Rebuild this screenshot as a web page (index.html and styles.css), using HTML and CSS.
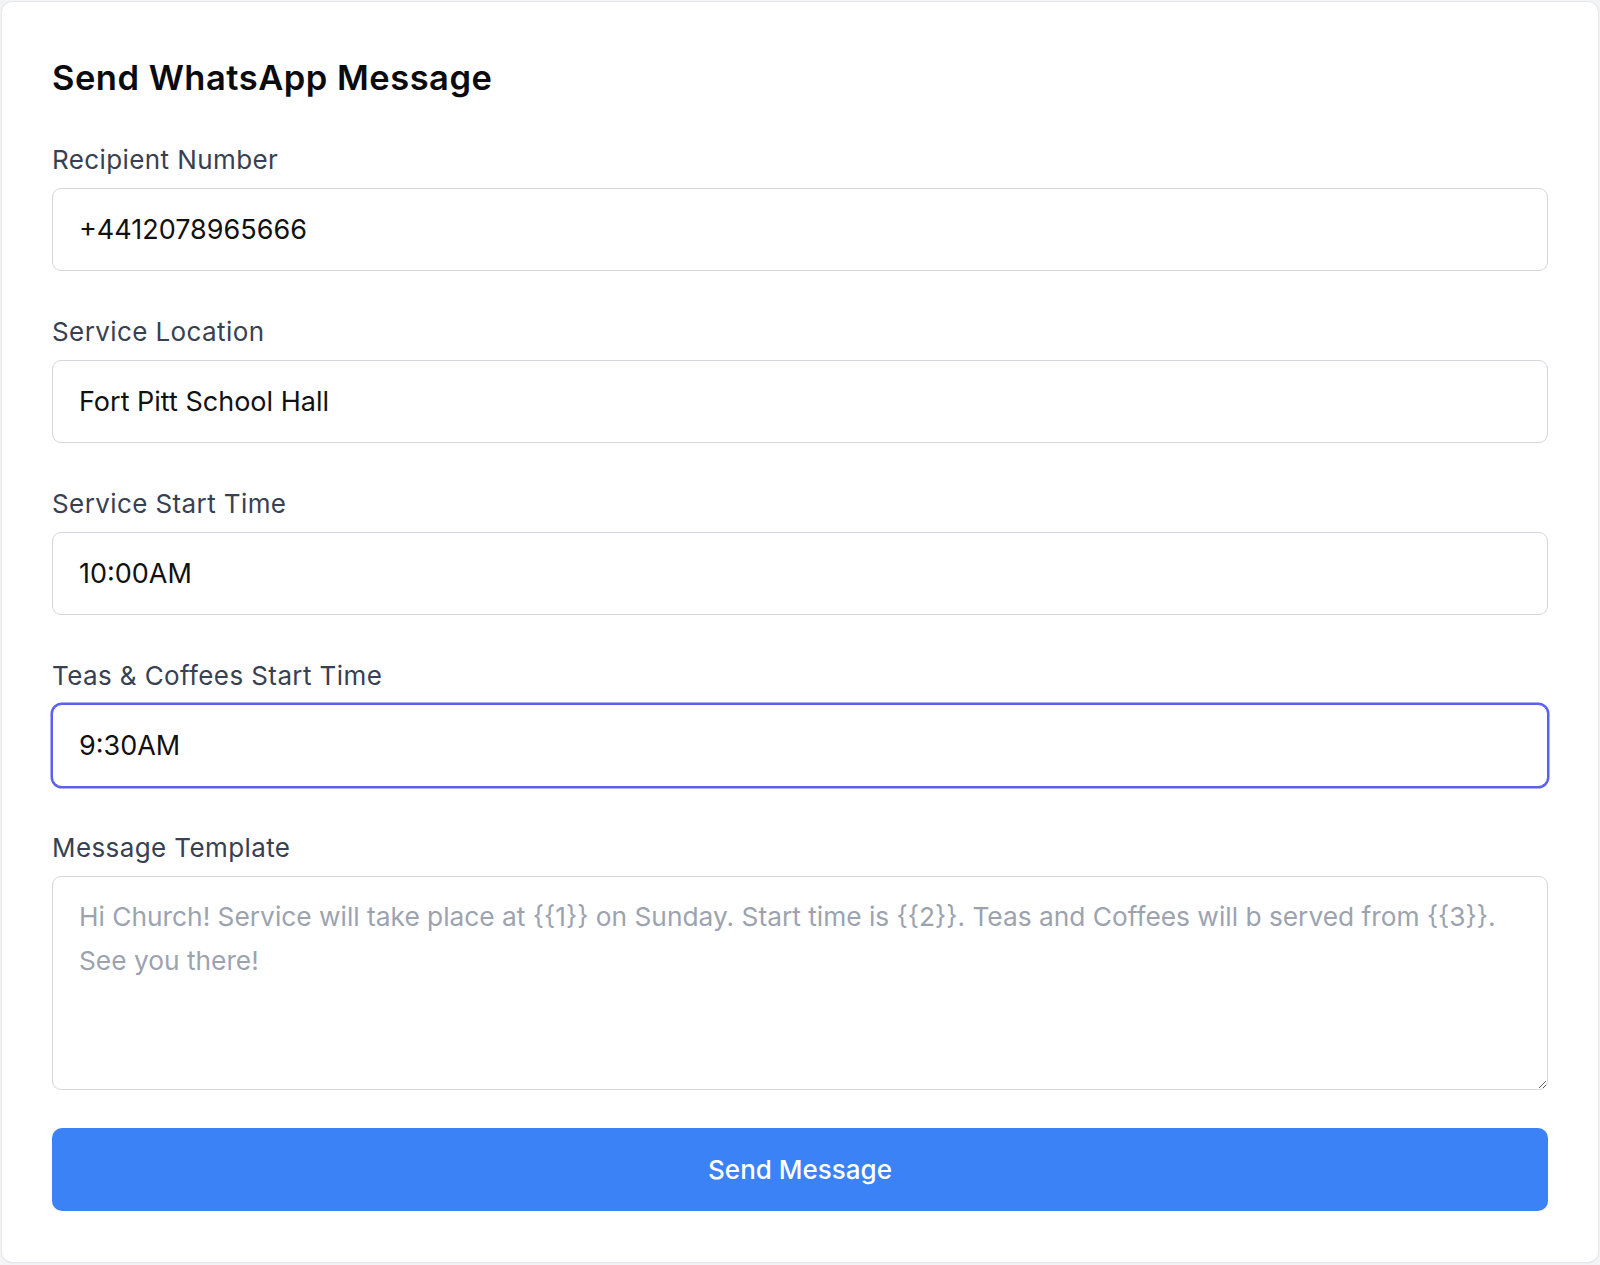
FILE: index.html
```html
<!DOCTYPE html>
<html lang="en">
<head>
    <meta charset="UTF-8">
    <meta name="viewport" content="width=device-width, initial-scale=1.0">
    <title>Send WhatsApp Message</title>
    <link rel="stylesheet" href="styles.css">
</head>
<body>
    <div class="msg_card">
        <h1 class="msg_tit">Send WhatsApp Message</h1>

        <form class="msg_form" onsubmit="return false">
            <div class="field">
                <label for="to">Recipient Number</label>
                <input type="text" id="to" class="inp" value="+4412078965666">
            </div>
            <div class="field">
                <label for="loc">Service Location</label>
                <input type="text" id="loc" class="inp" value="Fort Pitt School Hall">
            </div>
            <div class="field">
                <label for="start">Service Start Time</label>
                <input type="text" id="start" class="inp" value="10:00AM">
            </div>
            <div class="field">
                <label for="tea">Teas &amp; Coffees Start Time</label>
                <input type="text" id="tea" class="inp is_focus" value="9:30AM">
            </div>
            <div class="field field_last">
                <label for="tpl">Message Template</label>
                <textarea id="tpl" class="inp txt" placeholder="Hi Church! Service will take place at {{1}} on Sunday. Start time is {{2}}. Teas and Coffees will b served from {{3}}. See you there!"></textarea>
            </div>
            <button type="submit" class="btn_send">Send Message</button>
        </form>
    </div>
</body>
</html>
```

FILE: styles.css
```css
/* reset */
*{box-sizing: border-box;}
body,h1{margin: 0; padding: 0;}
body{
    padding: 2px; background-color: #f3f4f6;
    font-family: Inter, "Noto Sans", sans-serif;
    color: #111827;
}

/* card */
.msg_card{
    width: 1596px; min-height: 1260px;
    background-color: #fff;
    border-radius: 10px;
    box-shadow: 0 0 0 1px #e7e7ea, 0 1px 3px rgba(0,0,0,.06);
    padding: 52px 50px 51px;
}
.msg_tit{
    font-size: 34.5px; line-height: 48px; font-weight: 600;
    color: #0b0b0f; letter-spacing: 0.5px;
    margin-bottom: 40px;
}

/* fields */
.msg_form .field{margin-bottom: 43px;}
.msg_form .field_last{margin-bottom: 38px;}
.msg_form label{
    display: block;
    font-size: 26px; line-height: 36px; font-weight: 400;
    color: #374151; letter-spacing: 0.4px;
    margin-bottom: 10px;
}
.msg_form .inp{
    display: block; width: 100%; height: 83px;
    border: 1.5px solid #d4d6dc; border-radius: 9px;
    padding: 0 26px;
    font-family: inherit; font-size: 27px; color: #111;
    background-color: #fff; outline: none;
}
.msg_form .inp.is_focus{
    border-color: #5b5ff0;
    box-shadow: 0 0 0 1.5px #5b5ff0;
    border-radius: 10px;
}
.msg_form .txt{
    height: 214px; padding: 18px 26px 16px;
    font-size: 26.3px; line-height: 44px; resize: vertical;
}
.msg_form .txt::placeholder{color: #9ca3af;}

/* button */
.btn_send{
    display: block; width: 100%; height: 83px;
    border: 0; border-radius: 10px;
    background-color: #3b82f6; color: #fff;
    font-family: inherit; font-size: 26px; font-weight: 500;
    cursor: pointer;
}
```
